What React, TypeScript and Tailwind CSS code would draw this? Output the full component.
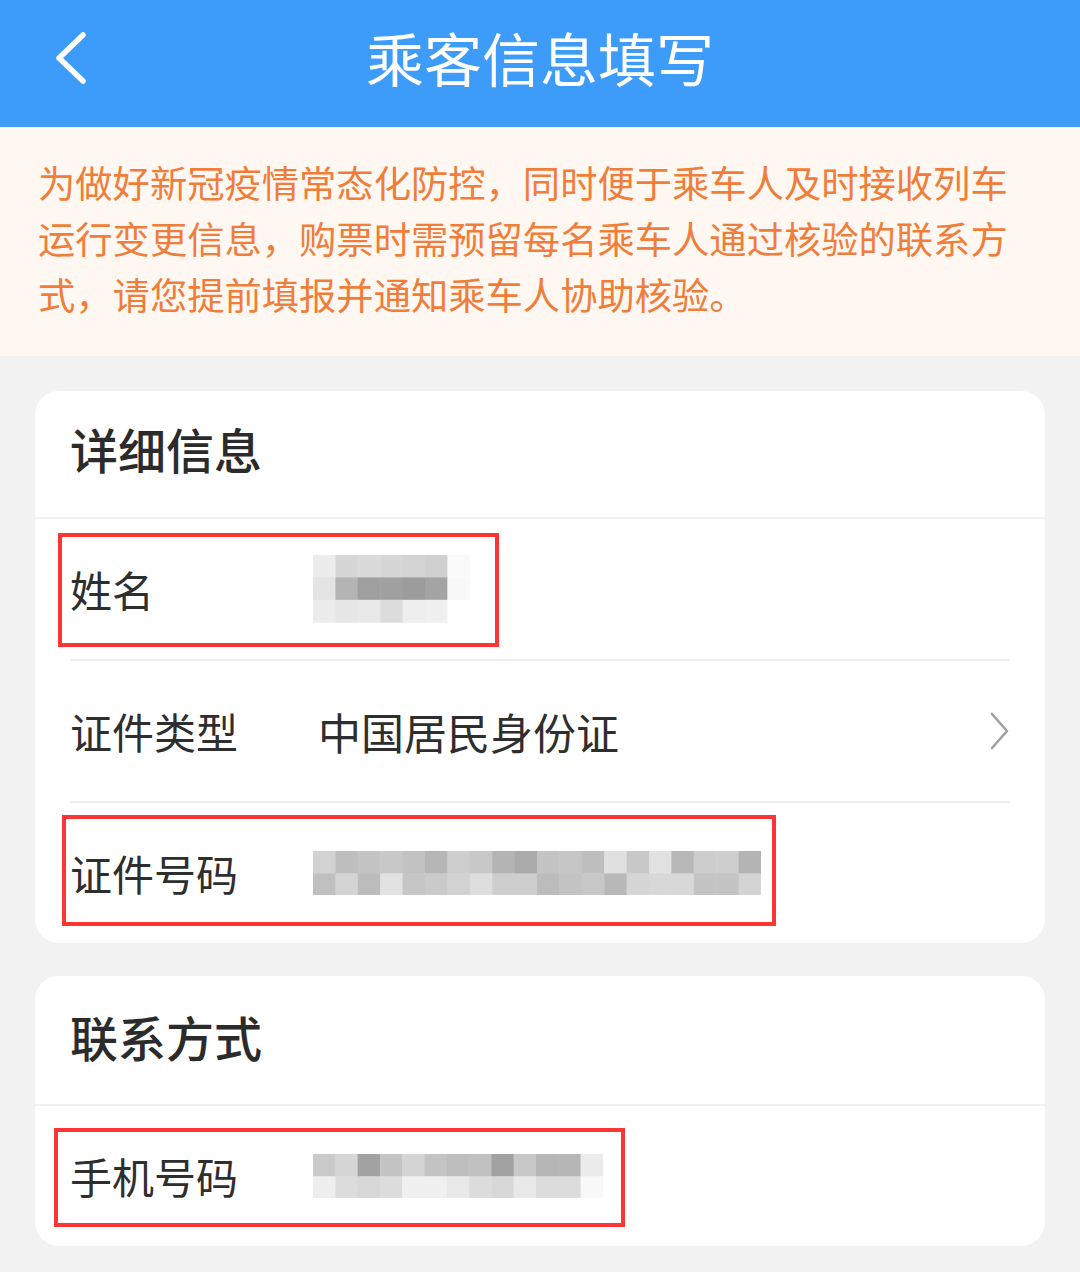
import React from "react";

const FONT = { fontFamily: '"Noto Sans CJK SC", "Noto Sans", sans-serif' };

function Pixels({ rows, cell }: { rows: string[][]; cell: number }) {
  const w = Math.max(...rows.map((r) => r.length)) * cell;
  const h = rows.length * cell;
  return (
    <svg width={w} height={h} viewBox={`0 0 ${w} ${h}`} className="block">
      {rows.map((r, i) =>
        r.map((c, j) => (
          <rect key={`${i}-${j}`} x={j * cell} y={i * cell} width={cell + 0.5} height={cell + 0.5} fill={c} />
        ))
      )}
    </svg>
  );
}

const nameRows = [
  ["#ececec", "#d6d6d6", "#dadada", "#d6d6d6", "#d4d4d4", "#d0d0d0", "#fafafa"],
  ["#e4e4e4", "#b4b4b4", "#9f9f9f", "#a0a0a0", "#9c9c9c", "#a4a4a4", "#f8f8f8"],
  ["#ececec", "#e6e6e6", "#e8e8e8", "#dcdcdc", "#eeeeee", "#f0f0f0", "#ffffff"],
];

const idRows = [
  ["#d2d2d2", "#bebebe", "#c4c4c4", "#c8c8c8", "#c2c2c2", "#b6b6b6", "#cecece", "#c8c8c8", "#b4b4b4", "#aaaaaa", "#c4c4c4", "#c6c6c6", "#bebebe", "#e0e0e0", "#c8c8c8", "#e2e2e2", "#b8b8b8", "#cdcdcd", "#cecece", "#b4b4b4"],
  ["#c0c0c0", "#d4d4d4", "#bcbcbc", "#e2e2e2", "#c6c6c6", "#cacaca", "#d2d2d2", "#dedede", "#cecece", "#cecece", "#bcbcbc", "#c4c4c4", "#c8c8c8", "#b8b8b8", "#d6d6d6", "#d8d8d8", "#d8d8d8", "#c4c4c4", "#c4c4c4", "#d4d4d4"],
];

const phoneRows = [
  ["#cacaca", "#d6d6d6", "#a2a2a2", "#c4c4c4", "#d4d4d4", "#c4c4c4", "#bebebe", "#c0c0c0", "#a2a2a2", "#c8c8c8", "#b6b6b6", "#b6b6b6", "#ececec"],
  ["#eeeeee", "#dcdcdc", "#d8d8d8", "#dcdcdc", "#f0f0f0", "#f0f0f0", "#e8e8e8", "#dcdcdc", "#d8d8d8", "#e8e8e8", "#dcdcdc", "#dcdcdc", "#f8f8f8"],
];

function Chevron() {
  return (
    <svg width="20" height="38" viewBox="0 0 20 38" className="block">
      <path d="M2 2 L17 19 L2 36" fill="none" stroke="#a0a0a0" strokeWidth="2.6" strokeLinecap="round" strokeLinejoin="round" />
    </svg>
  );
}

export default function App() {
  return (
    <div className="w-[1080px] h-[1272px] bg-[#f2f2f2] overflow-hidden" style={FONT}>
      {/* Header */}
      <div className="relative h-[127px] bg-[#3d9bf9] flex items-center justify-center">
        <div className="absolute left-[52px] top-[31px]">
          <svg width="38" height="54" viewBox="0 0 38 54" className="block">
            <path d="M31 4 L7 27 L31 50" fill="none" stroke="#ffffff" strokeWidth="5.5" strokeLinecap="round" strokeLinejoin="round" />
          </svg>
        </div>
        <div className="text-white text-[58px] leading-none pb-[14px]">乘客信息填写</div>
      </div>

      {/* Notice */}
      <div className="bg-[#fff8f2] pl-[38px] pr-[70px] pt-[27px] pb-[34px] text-[37.3px] leading-[56px] text-[#f07d3a]">
        为做好新冠疫情常态化防控，同时便于乘车人及时接收列车运行变更信息，购票时需预留每名乘车人通过核验的联系方式，请您提前填报并通知乘车人协助核验。
      </div>

      {/* Card 1 */}
      <div className="mx-[35px] mt-[35px] bg-white rounded-[24px] overflow-hidden">
        <div className="h-[128px] flex items-center pl-[35px] pb-[12px] border-b-2 border-[#f0f0f0]">
          <span className="text-[48px] font-medium text-[#2b2b2b] leading-none">详细信息</span>
        </div>

        <div className="relative mx-[35px] h-[142px] border-b-2 border-[#eeeeee] flex items-center">
          <span className="w-[243px] text-[42px] text-[#2e2e2e] leading-none">姓名</span>
          <Pixels rows={nameRows} cell={22.4} />
          <div className="absolute left-[-12px] top-[14px] w-[441px] h-[114px] border-[4px] border-[#ff3434]" />
        </div>

        <div className="relative mx-[35px] h-[142px] border-b-2 border-[#eeeeee] flex items-center">
          <span className="w-[248px] text-[42px] text-[#2e2e2e] leading-none">证件类型</span>
          <span className="flex-1 text-[43px] text-[#2e2e2e] leading-none">中国居民身份证</span>
          <Chevron />
        </div>

        <div className="relative mx-[35px] h-[140px] flex items-center">
          <span className="w-[243px] text-[42px] text-[#2e2e2e] leading-none">证件号码</span>
          <Pixels rows={idRows} cell={22.4} />
          <div className="absolute left-[-8px] top-[12px] w-[714px] h-[111px] border-[4px] border-[#ff3434]" />
        </div>
      </div>

      {/* Card 2 */}
      <div className="mx-[35px] mt-[33px] bg-white rounded-[24px] overflow-hidden">
        <div className="h-[130px] flex items-center pl-[35px] pb-[8px] border-b-2 border-[#f0f0f0]">
          <span className="text-[48px] font-medium text-[#2b2b2b] leading-none">联系方式</span>
        </div>
        <div className="relative mx-[35px] h-[140px] flex items-center">
          <span className="w-[243px] text-[42px] text-[#2e2e2e] leading-none">手机号码</span>
          <Pixels rows={phoneRows} cell={22.3} />
          <div className="absolute left-[-16px] top-[22px] w-[571px] h-[99px] border-[4px] border-[#ff3434]" />
        </div>
      </div>
    </div>
  );
}
